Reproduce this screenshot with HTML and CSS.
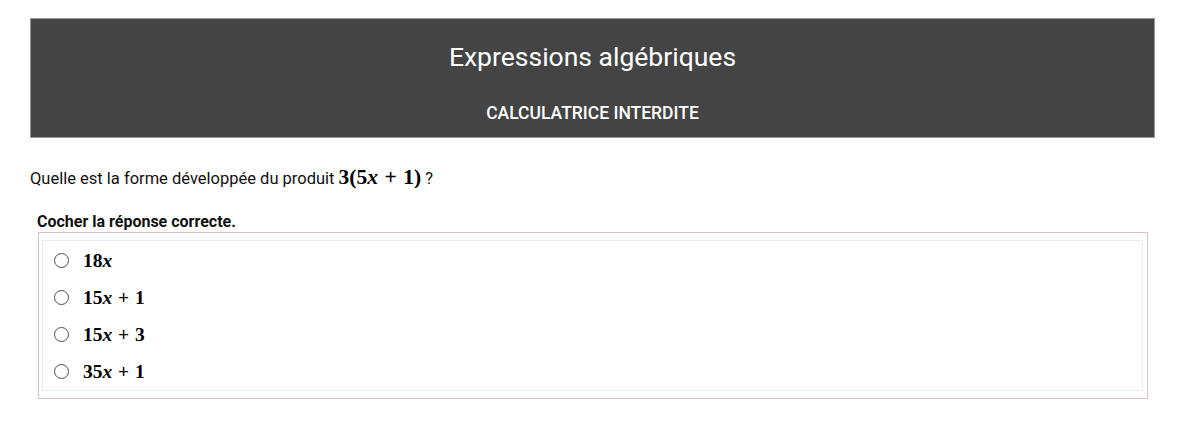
FILE: index.html
```html
<!DOCTYPE html>
<html lang="fr">
<head>
<meta charset="utf-8">
<title>Expressions algébriques</title>
<link rel="stylesheet" href="styles.css">
</head>
<body>
<div class="page">
  <header class="banner">
    <h1 class="title">Expressions algébriques</h1>
    <p class="subtitle">CALCULATRICE INTERDITE</p>
  </header>
  <p class="question">Quelle est la forme développée du produit <span class="math math-lg">3(5<i>x</i><span class="op">+</span>1)</span> ?</p>
  <div class="answer">
    <p class="instruction">Cocher la réponse correcte.</p>
    <div class="choices-outer">
      <ul class="choices">
        <li class="choice"><span class="radio"></span><span class="math">18<i>x</i></span></li>
        <li class="choice"><span class="radio"></span><span class="math">15<i>x</i><span class="op">+</span>1</span></li>
        <li class="choice"><span class="radio"></span><span class="math">15<i>x</i><span class="op">+</span>3</span></li>
        <li class="choice"><span class="radio"></span><span class="math">35<i>x</i><span class="op">+</span>1</span></li>
      </ul>
    </div>
  </div>
</div>
</body>
</html>
```

FILE: styles.css
```css
* { box-sizing: border-box; }
html, body { margin: 0; padding: 0; background: #fff; }
body { font-family: Roboto, "Liberation Sans", sans-serif; color: #111; }

.page { padding: 18px 33px 0 30px; }

.banner {
  background: #444;
  border: 1px solid #9a9a9a;
  height: 120px;
  color: #fff;
  text-align: center;
  display: flex;
  flex-direction: column;
  align-items: center;
}
.title {
  margin: 0;
  padding-top: 23px;
  font-size: 26.5px;
  font-weight: 400;
  line-height: 30px;
}
.subtitle {
  margin: 0;
  padding-top: 31px;
  font-size: 17.5px;
  font-weight: 500;
  line-height: 20px;
}

.question {
  margin: 26px 0 0 0;
  font-size: 16.5px;
  line-height: 26px;
}

.math {
  font-family: "Liberation Serif", "DejaVu Serif", serif;
  font-weight: 700;
  font-size: 19.5px;
  color: #000;
}
.math i { font-style: italic; }
.math-lg { font-size: 21.5px; }
.op { margin: 0 0.3em; }

.answer { padding: 0 7px 0 7px; }
.instruction {
  margin: 21px 0 0 0;
  font-size: 16px;
  font-weight: 700;
  line-height: 18px;
}
.choices-outer {
  margin: 1px 0 0 1px;
  border: 1px solid #d9bfca;
  padding: 7px 4px 7px 3px;
}
.choices {
  list-style: none;
  margin: 0;
  padding: 1px 0 0 11px;
  border: 1px solid #ececec;
}
.choice {
  display: flex;
  align-items: center;
  height: 37px;
}
.radio {
  width: 15px;
  height: 15px;
  border: 1.8px solid #4d4d4d;
  border-radius: 50%;
  margin-right: 14px;
  flex: none;
}
```
